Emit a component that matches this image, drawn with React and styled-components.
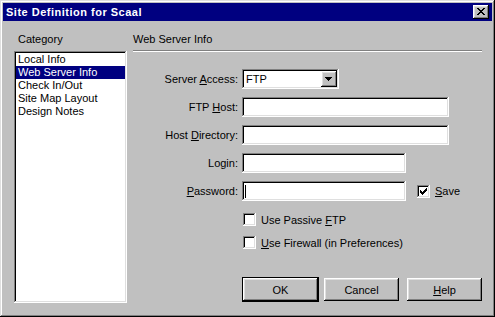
import styled, { createGlobalStyle, css } from "styled-components";

const GlobalStyle = createGlobalStyle`
  html, body {
    margin: 0;
    padding: 0;
    background: #c0c0c0;
  }
  body {
    font-family: "Liberation Sans", Arial, sans-serif;
    font-size: 11px;
    color: #000;
  }
`;

const raised = css`
  box-shadow: inset -1px -1px #000, inset 1px 1px #fff,
    inset -2px -2px #808080, inset 2px 2px #dfdfdf;
`;

const sunken = css`
  box-shadow: inset -1px -1px #fff, inset 1px 1px #808080,
    inset -2px -2px #dfdfdf, inset 2px 2px #000;
`;

const Window = styled.div`
  width: 495px;
  height: 317px;
  box-sizing: border-box;
  padding: 3px;
  background: #c0c0c0;
  display: flex;
  flex-direction: column;
  box-shadow: inset -1px -1px #000, inset 1px 1px #dfdfdf,
    inset -2px -2px #808080, inset 2px 2px #fff;
`;

const TitleBar = styled.div`
  height: 18px;
  background: #000080;
  color: #fff;
  font-weight: bold;
  font-size: 11px;
  letter-spacing: 0.5px;
  display: flex;
  align-items: center;
  justify-content: space-between;
  padding: 0 3px 0 3px;
`;

const CloseButton = styled.div`
  width: 16px;
  height: 14px;
  background: #c0c0c0;
  ${raised};
  svg {
    display: block;
  }
`;

const Body = styled.div`
  flex: 1;
  display: flex;
  padding: 12px 10px 0 11px;
`;

const LeftPane = styled.div`
  width: 113px;
  display: flex;
  flex-direction: column;
`;

const Caption = styled.div`
  line-height: 13px;
  height: 13px;
  padding-left: ${(p) => p.$indent || 0}px;
`;

const ListBox = styled.div`
  margin-top: 5px;
  height: 252px;
  box-sizing: border-box;
  padding: 2px;
  background: #fff;
  ${sunken};
`;

const ListItem = styled.div`
  line-height: 13px;
  height: 13px;
  padding-left: 2px;
  white-space: nowrap;
  background: ${(p) => (p.$selected ? "#000080" : "transparent")};
  color: ${(p) => (p.$selected ? "#fff" : "#000")};
`;

const RightPane = styled.div`
  flex: 1;
  margin-left: 6px;
  display: flex;
  flex-direction: column;
`;

const Separator = styled.div`
  margin-top: 4px;
  border-top: 1px solid #808080;
  border-bottom: 1px solid #fff;
`;

const Form = styled.div`
  margin-top: 17px;
  display: flex;
  flex-direction: column;
  gap: 8px;
`;

const Row = styled.div`
  display: flex;
  align-items: center;
  height: 20px;
`;

const Label = styled.div`
  width: 105px;
  margin-right: 4px;
  text-align: right;
  white-space: nowrap;
`;

const Field = styled.div`
  width: ${(p) => p.$width}px;
  height: 20px;
  box-sizing: border-box;
  padding: 2px 3px;
  background: #fff;
  ${sunken};
  display: flex;
  align-items: center;
`;

const Select = styled(Field)`
  padding: 2px 2px 2px 4px;
  justify-content: space-between;
`;

const DropButton = styled.div`
  width: 16px;
  height: 16px;
  background: #c0c0c0;
  ${raised};
  svg {
    display: block;
  }
`;

const Caret = styled.span`
  width: 1px;
  height: 13px;
  background: #000;
`;

const CheckRow = styled.div`
  display: flex;
  align-items: center;
  margin-left: ${(p) => p.$indent || 0}px;
  margin-top: ${(p) => p.$top || 0}px;
  height: 13px;
`;

const Box = styled.div`
  width: 13px;
  height: 13px;
  flex: none;
  background: #fff;
  ${sunken};
  margin-right: 5px;
  svg {
    display: block;
  }
`;

const Buttons = styled.div`
  display: flex;
  align-items: center;
  margin-top: 29px;
  margin-left: 109px;
  gap: 6px;
`;

const Button = styled.div`
  width: 75px;
  height: 23px;
  box-sizing: border-box;
  background: #c0c0c0;
  ${raised};
  display: flex;
  align-items: center;
  justify-content: center;
  outline: ${(p) => (p.$default ? "1px solid #000" : "none")};
  margin-left: ${(p) => (p.$default ? 1 : 0)}px;
  margin-right: ${(p) => p.$gap || 0}px;
`;

const U = styled.span`
  text-decoration: underline;
  text-underline-offset: 1px;
`;

const CloseGlyph = () => (
  <svg width="16" height="14" viewBox="0 0 16 14">
    <g fill="#000">
      <rect x="4" y="3" width="2" height="1" />
      <rect x="10" y="3" width="2" height="1" />
      <rect x="5" y="4" width="2" height="1" />
      <rect x="9" y="4" width="2" height="1" />
      <rect x="6" y="5" width="4" height="1" />
      <rect x="7" y="6" width="2" height="1" />
      <rect x="6" y="7" width="4" height="1" />
      <rect x="5" y="8" width="2" height="1" />
      <rect x="9" y="8" width="2" height="1" />
      <rect x="4" y="9" width="2" height="1" />
      <rect x="10" y="9" width="2" height="1" />
    </g>
  </svg>
);

const ArrowGlyph = () => (
  <svg width="16" height="16" viewBox="0 0 16 16">
    <g fill="#000">
      <rect x="4" y="6" width="7" height="1" />
      <rect x="5" y="7" width="5" height="1" />
      <rect x="6" y="8" width="3" height="1" />
      <rect x="7" y="9" width="1" height="1" />
    </g>
  </svg>
);

const CheckGlyph = () => (
  <svg width="13" height="13" viewBox="0 0 13 13">
    <g fill="#000">
      <rect x="9" y="3" width="1" height="1" />
      <rect x="8" y="4" width="2" height="1" />
      <rect x="3" y="5" width="1" height="1" />
      <rect x="7" y="5" width="3" height="1" />
      <rect x="3" y="6" width="2" height="1" />
      <rect x="6" y="6" width="3" height="1" />
      <rect x="3" y="7" width="5" height="1" />
      <rect x="4" y="8" width="3" height="1" />
      <rect x="5" y="9" width="1" height="1" />
    </g>
  </svg>
);

const categories = [
  "Local Info",
  "Web Server Info",
  "Check In/Out",
  "Site Map Layout",
  "Design Notes",
];

export default function App() {
  return (
    <>
      <GlobalStyle />
      <Window>
        <TitleBar>
          <span>Site Definition for Scaal</span>
          <CloseButton>
            <CloseGlyph />
          </CloseButton>
        </TitleBar>
        <Body>
          <LeftPane>
            <Caption $indent={4}>Category</Caption>
            <ListBox>
              {categories.map((c) => (
                <ListItem key={c} $selected={c === "Web Server Info"}>
                  {c}
                </ListItem>
              ))}
            </ListBox>
          </LeftPane>
          <RightPane>
            <Caption>Web Server Info</Caption>
            <Separator />
            <Form>
              <Row>
                <Label>
                  Server <U>A</U>ccess:
                </Label>
                <Select $width={97}>
                  <span>FTP</span>
                  <DropButton>
                    <ArrowGlyph />
                  </DropButton>
                </Select>
              </Row>
              <Row>
                <Label>
                  FTP <U>H</U>ost:
                </Label>
                <Field $width={207} />
              </Row>
              <Row>
                <Label>
                  Host <U>D</U>irectory:
                </Label>
                <Field $width={207} />
              </Row>
              <Row>
                <Label>Login:</Label>
                <Field $width={164} />
              </Row>
              <Row>
                <Label>
                  <U>P</U>assword:
                </Label>
                <Field $width={164}>
                  <Caret />
                </Field>
                <CheckRow $indent={11}>
                  <Box>
                    <CheckGlyph />
                  </Box>
                  <span>
                    <U>S</U>ave
                  </span>
                </CheckRow>
              </Row>
            </Form>
            <CheckRow $indent={110} $top={12}>
              <Box />
              <span>
                Use Passive <U>F</U>TP
              </span>
            </CheckRow>
            <CheckRow $indent={110} $top={10}>
              <Box />
              <span>
                <U>U</U>se Firewall (in Preferences)
              </span>
            </CheckRow>
            <Buttons>
              <Button $default>OK</Button>
              <Button $gap={2}>Cancel</Button>
              <Button>
                <U>H</U>elp
              </Button>
            </Buttons>
          </RightPane>
        </Body>
      </Window>
    </>
  );
}
